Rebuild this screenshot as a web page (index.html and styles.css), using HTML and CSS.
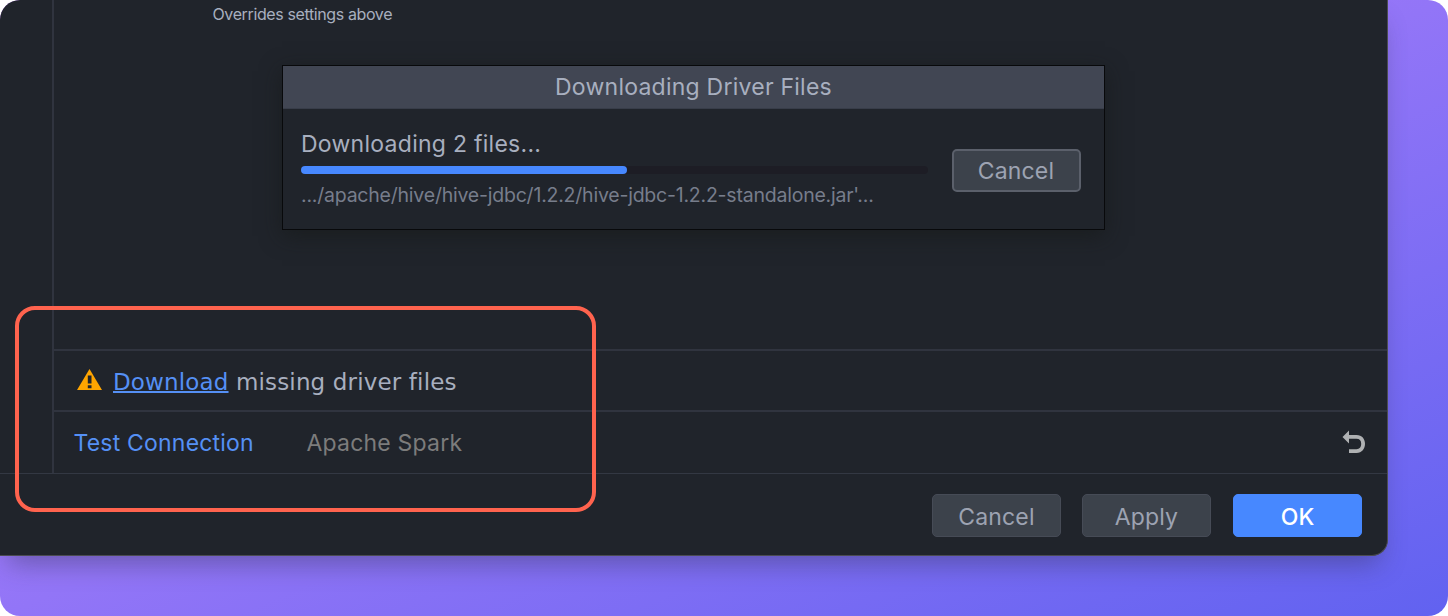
FILE: index.html
```html
<!DOCTYPE html>
<html lang="en">
<head>
<meta charset="utf-8">
<title>Data Sources and Drivers</title>
<link rel="stylesheet" href="styles.css">
</head>
<body>
<div class="backdrop">
  <main class="window">
    <div class="workspace">
      <aside class="sidebar"></aside>
      <section class="content">
        <div class="settings">
          <p class="hint">Overrides settings above</p>
          <div class="dialog">
            <header class="dialog-title"><span class="title-text">Downloading Driver Files</span></header>
            <div class="dialog-body">
              <div class="download">
                <div class="download-label"><span class="label-text">Downloading 2 files...</span></div>
                <div class="track"><div class="bar" style="width:52%"></div></div>
                <div class="download-path"><span class="path-text">.../apache/hive/hive-jdbc/1.2.2/hive-jdbc-1.2.2-standalone.jar'...</span></div>
              </div>
              <button class="button button-outlined"><span>Cancel</span></button>
            </div>
          </div>
        </div>
        <div class="row warning-row">
          <svg class="warning-icon" width="26" height="22" viewBox="0 0 26 22"><path d="M12.5 0L25 21H0z" fill="#ffa500"/><path d="M10.8 6.5h3.7v8h-3.7zM10.8 16.2h3.7v3h-3.7z" fill="#20242b"/></svg>
          <span class="message"><a class="download-link">Download</a> missing driver files</span>
        </div>
        <div class="row connection-row">
          <a class="test-link">Test Connection</a>
          <span class="driver">Apache Spark</span>
          <svg class="revert-icon" width="24" height="24" viewBox="0 0 24 24"><path d="M.5 7L7 .5V5h7.5C20 5 23 9 23 13.8S20 23 14.5 23H7v-3.8h7.5c3 0 4.7-2.1 4.7-5.4s-1.7-5-4.7-5H7v4.7z" fill="#afb1b3"/></svg>
        </div>
      </section>
    </div>
    <footer class="actions">
      <button class="button"><span>Cancel</span></button>
      <button class="button"><span>Apply</span></button>
      <button class="button button-primary"><span>OK</span></button>
    </footer>
    <div class="highlight"></div>
  </main>
</div>
</body>
</html>
```

FILE: styles.css
```css
* { box-sizing: border-box; }
body { margin: 0; background: #fff; font-family: Inter, sans-serif; }
.backdrop {
  width: 1448px; height: 616px; overflow: hidden; border-radius: 20px;
  background: linear-gradient(to bottom right, #c084fc, #9275f7 50%, #6162f0);
}
.window {
  position: relative; display: flex; flex-direction: column;
  width: 1388px; height: 556px;
  background: #20242b; border: solid #4b4c52; border-width: 0 1px 1px 0;
  border-radius: 0 0 16px 0; box-shadow: 0 16px 26px -8px rgba(50,50,80,.42);
}
.workspace { display: flex; height: 473px; }
.sidebar { width: 54px; border-right: 2px solid #30343f; }
.content { flex: 1; display: flex; flex-direction: column; }
.settings { height: 349px; }
.hint { margin: 0; padding: 4px 0 0 158.5px; height: 65px; font-size: 16px; line-height: 20px; letter-spacing: -.38px; color: #a8afbf; }
.dialog {
  width: 823px; height: 165px; margin-left: 228px; border: 1px solid #08090b;
  background: #20242b; box-shadow: 0 6px 20px rgba(22,25,24,.6);
}
.dialog-title { display: flex; justify-content: center; height: 43px; padding-top: 7px; background: #414653; border-bottom: 1px solid #383d49; }
.title-text, .label-text { font-size: 23px; line-height: 29px; letter-spacing: .24px; color: #a8afbf; white-space: nowrap; }
.dialog-body { display: flex; justify-content: space-between; padding: 21px 23.5px 0 18px; }
.download { width: 627px; }
.label-text { display: block; letter-spacing: .27px; }
.track { height: 8px; margin-top: 7px; border-radius: 4px; background: #1d1d25; }
.bar { height: 8px; border-radius: 4px; background: #4788ff; }
.download-path { padding-top: 9px; }
.path-text { display: block; width: max-content; font-size: 19.5px; line-height: 25px; letter-spacing: -.22px; color: #777d8b; white-space: nowrap; }
.button {
  display: flex; align-items: center; justify-content: center; flex: none;
  width: 129px; height: 43px; padding: 2px 0 0; border: 1px solid #464b56; border-radius: 5px;
  background: #3c424b; color: #9da3b2; font: 23px/28px Inter, sans-serif; letter-spacing: .15px;
}
.button-outlined { margin-top: 19px; padding-top: 1px; border: 2px solid #5b606b; }
.button-primary { background: #4788ff; border-color: #4788ff; color: #fff; font-weight: 500; }
.row { display: flex; align-items: center; border-top: 2px solid #30343f; }
.warning-row { height: 61px; padding-left: 23px; }
.warning-icon { margin-top: -1px; }
.message { margin: 3px 0 0 10px; font: 23px/28px "DejaVu Sans", sans-serif; letter-spacing: .15px; color: #a8afbf; white-space: pre; }
.download-link { color: #5590f5; text-decoration: underline; text-decoration-thickness: 2px; text-underline-offset: 1px; text-decoration-skip-ink: none; }
.connection-row { height: 63px; padding: 1px 21px 0 19.5px; font-size: 23px; line-height: 28px; letter-spacing: .2px; }
.test-link { color: #5590f5; width: 233px; white-space: nowrap; }
.driver { color: #7c7c7c; }
.revert-icon { margin: -3px 0 0 auto; }
.actions { display: flex; justify-content: flex-end; gap: 22px; padding: 20px 25px 0 0; border-top: 1px solid #333843; height: 82px; }
.actions .button:first-child { margin-right: -1px; }
.highlight { position: absolute; left: 15px; top: 306px; width: 581px; height: 206px; border: 4px solid #ff634e; border-radius: 20px; }
```
